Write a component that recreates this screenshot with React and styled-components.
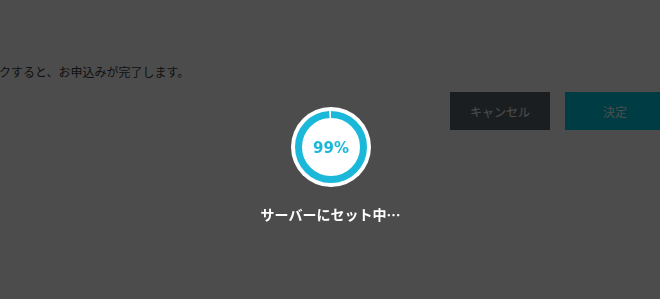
import React from "react";
import styled, { createGlobalStyle } from "styled-components";

const Global = createGlobalStyle`
  html, body { margin: 0; padding: 0; background: #ffffff; }
  body { font-family: "Noto Sans CJK JP", "Noto Sans", sans-serif; overflow: hidden; }
`;

const Page = styled.div`
  width: 660px;
  height: 299px;
  overflow: hidden;
  padding-top: 63px;
  box-sizing: border-box;
`;

const Notice = styled.p`
  margin: 0 0 0 -1px;
  font-size: 12px;
  line-height: 18px;
  color: #3a3a3a;
  white-space: nowrap;
`;

const Actions = styled.div`
  display: flex;
  justify-content: flex-end;
  gap: 15px;
  margin-top: 11px;
  margin-right: -5px;
`;

const Button = styled.button`
  width: 100px;
  height: 38px;
  border: 0;
  padding: 0;
  font-family: "Noto Sans CJK JP", sans-serif;
  font-size: 12px;
  color: #ffffff;
  background: ${(p) => (p.$primary ? "#00c8e3" : "#5d676b")};
`;

const Overlay = styled.div`
  position: fixed;
  inset: 0;
  background: rgba(0, 0, 0, 0.7);
  display: flex;
  flex-direction: column;
  align-items: center;
  padding-top: 107px;
  padding-left: 2px;
  box-sizing: border-box;
`;

const Spinner = styled.div`
  position: relative;
  width: 80px;
  height: 80px;
`;

const Percent = styled.span`
  position: absolute;
  inset: 0;
  display: flex;
  align-items: center;
  justify-content: center;
  padding-top: 2px;
  font-family: "DejaVu Sans", Verdana, sans-serif;
  font-weight: bold;
  font-size: 15px;
  color: #1bb8da;
`;

const Status = styled.div`
  margin-top: 17px;
  margin-left: -1px;
  font-family: "Noto Sans CJK JP", sans-serif;
  font-weight: bold;
  font-size: 14px;
  line-height: 20px;
  color: #ffffff;
  white-space: nowrap;
`;

function Ring({ value }) {
  const r = 32.5;
  const c = 2 * Math.PI * r;
  return (
    <svg width="80" height="80" viewBox="0 0 80 80">
      <circle cx="40" cy="40" r="40" fill="#ffffff" />
      <circle
        cx="40"
        cy="40"
        r={r}
        fill="none"
        stroke="#1bb8da"
        strokeWidth="7"
        strokeDasharray={`${(c * value) / 100} ${c}`}
        transform="rotate(-90 40 40)"
      />
    </svg>
  );
}

export default function App() {
  return (
    <>
      <Global />
      <Page>
        <Notice>クすると、お申込みが完了します。</Notice>
        <Actions>
          <Button>キャンセル</Button>
          <Button $primary>決定</Button>
        </Actions>
      </Page>
      <Overlay>
        <Spinner>
          <Ring value={99} />
          <Percent>99%</Percent>
        </Spinner>
        <Status>サーバーにセット中…</Status>
      </Overlay>
    </>
  );
}
